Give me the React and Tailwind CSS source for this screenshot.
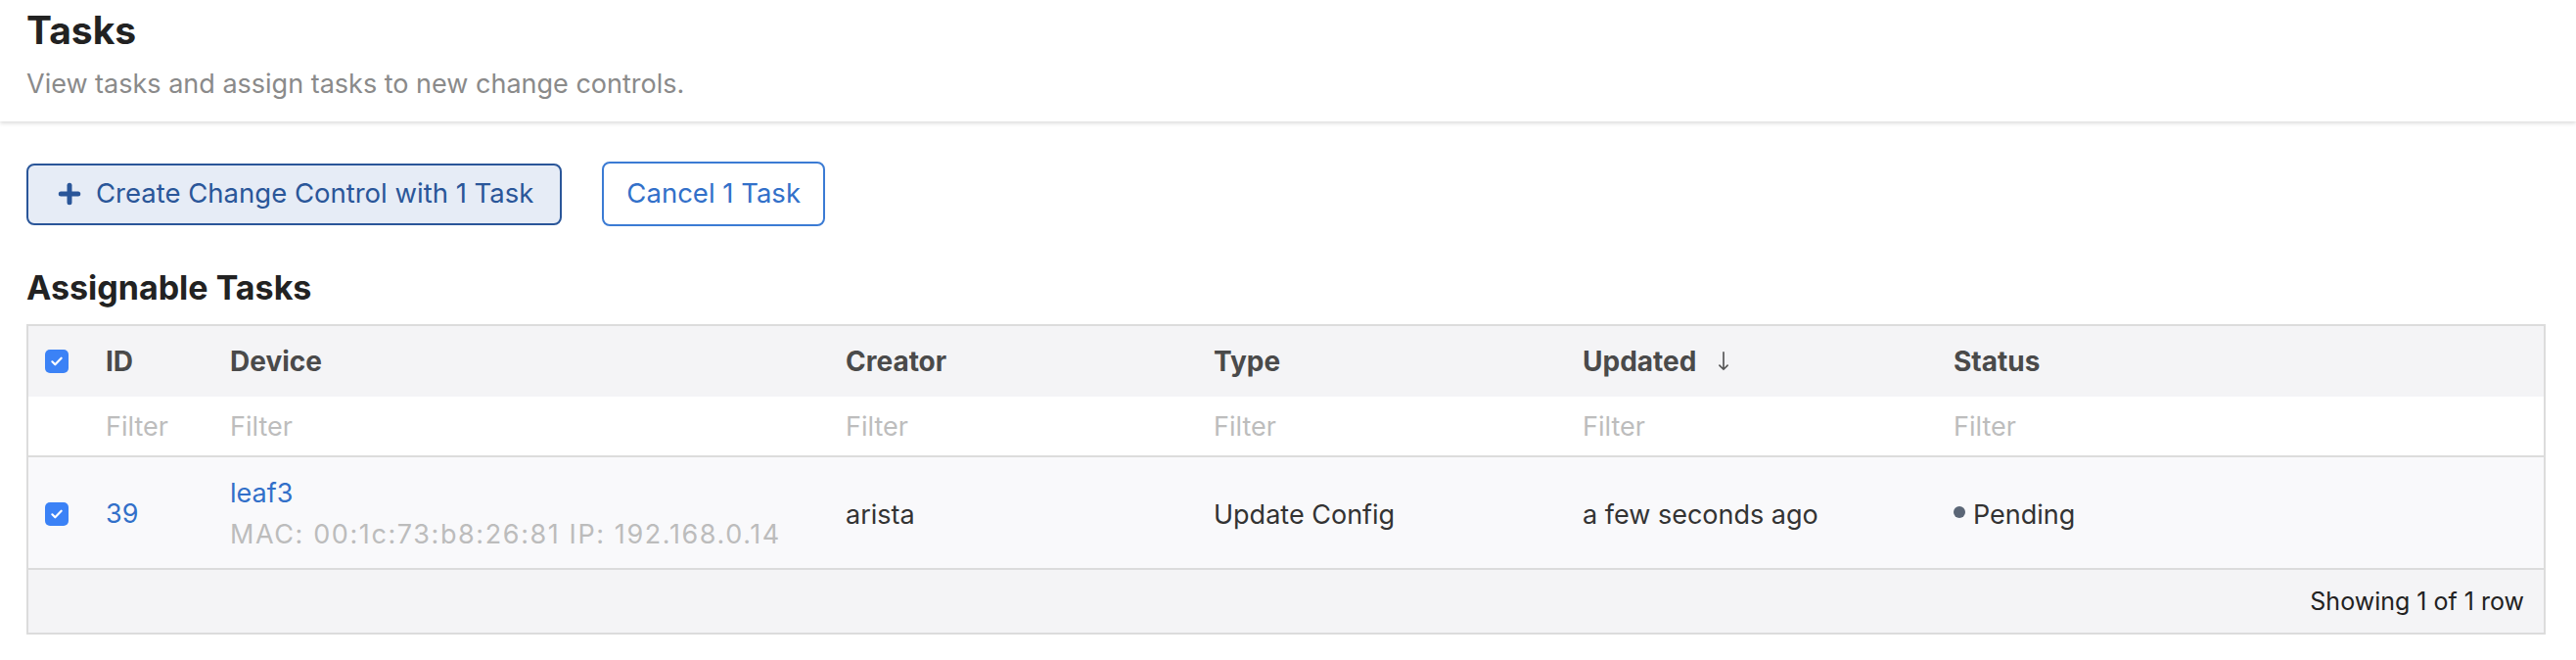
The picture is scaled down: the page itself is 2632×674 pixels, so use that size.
import { Plus } from 'lucide-react';

const COLS = 'grid grid-cols-[61px_127px_629px_376px_377px_379px_1fr]';

function Checkbox() {
  return (
    <span className="flex h-[24px] w-[24px] items-center justify-center rounded-[5px] bg-[#3b82f6]">
      <svg viewBox="0 0 24 24" className="h-[16px] w-[16px]" fill="none" stroke="white" strokeWidth={3.2} strokeLinecap="round" strokeLinejoin="round">
        <path d="M5 12.5l4.5 4.5L19 7" />
      </svg>
    </span>
  );
}

function SortArrow() {
  return (
    <svg viewBox="0 0 12 24" className="ml-[22px] h-[22px] w-[12px]" fill="none" stroke="#555" strokeWidth={1.8} strokeLinecap="round" strokeLinejoin="round">
      <path d="M6 2v19M1.5 16.5L6 21l4.5-4.5" />
    </svg>
  );
}

export default function App() {
  const headers = ['ID', 'Device', 'Creator', 'Type', 'Updated', 'Status'];

  return (
    <div className="min-h-screen bg-white font-['Inter','Noto_Sans',sans-serif] text-[#222]">
      {/* Page header */}
      <header className="relative z-10 h-[124px] bg-white px-[27px] pt-[6px] shadow-[0_2px_4px_rgba(0,0,0,0.14)]">
        <h1 className="text-[39px] font-bold leading-[50px] text-[#222]">Tasks</h1>
        <p className="mt-[12px] text-[27px] leading-[36px] text-[#8a8a8a]">
          View tasks and assign tasks to new change controls.
        </p>
      </header>

      <main className="px-[27px]">
        {/* Actions */}
        <div className="mt-[41px] flex h-[66px] items-center gap-[41px]">
          <button className="flex h-[63px] items-center gap-[12px] rounded-[8px] border-2 border-[#2a5699] bg-[#e6ecf6] pl-[27px] pr-[27px] text-[27.5px] text-[#2a5699]">
            <Plus className="h-[30px] w-[30px]" strokeWidth={4} />
            Create Change Control with 1 Task
          </button>
          <button className="flex h-[66px] items-center rounded-[8px] border-2 border-[#3b7bd4] bg-white px-[23px] text-[27.5px] text-[#3270c9]">
            Cancel 1 Task
          </button>
        </div>

        <h2 className="mt-[43px] text-[34px] font-bold leading-[40px] text-[#222]">Assignable Tasks</h2>

        {/* Table */}
        <div className="mt-[17px] w-[2574px] border-2 border-[#dcdcdc] text-[27px]">
          <div className={`${COLS} h-[72px] items-center bg-[#f4f4f6] text-[28px] font-bold text-[#4a4a4a]`}>
            <div className="pl-[17px]">
              <Checkbox />
            </div>
            {headers.map((h) => (
              <div key={h} className="flex items-center pl-[18px]">
                {h}
                {h === 'Updated' && <SortArrow />}
              </div>
            ))}
          </div>

          <div className={`${COLS} h-[62px] items-center border-b-2 border-[#dcdcdc] bg-white text-[#bdbdbd]`}>
            <div />
            {headers.map((h) => (
              <div key={h} className="pl-[18px] pt-[2px]">Filter</div>
            ))}
          </div>

          <div className={`${COLS} h-[115px] items-center border-b-2 border-[#dcdcdc] bg-[#f9f9fb] text-[#333]`}>
            <div className="pl-[17px] pt-[2px]">
              <Checkbox />
            </div>
            <div className="pl-[18px] pt-[4px] text-[#3270c9]">39</div>
            <div className="pl-[18px] pt-[2px] leading-[42px]">
              <div className="text-[#3270c9]">leaf3</div>
              <div className="whitespace-nowrap tracking-[1.6px] text-[#bcbcbc]">MAC: 00:1c:73:b8:26:81 IP: 192.168.0.14</div>
            </div>
            <div className="pl-[18px] pt-[5px]">arista</div>
            <div className="pl-[18px] pt-[5px]">Update Config</div>
            <div className="pl-[18px] pt-[5px]">a few seconds ago</div>
            <div className="flex items-center gap-[8px] pl-[18px] pt-[5px]">
              <span className="mb-[6px] h-[12px] w-[12px] rounded-full bg-[#5b6676]" />
              Pending
            </div>
          </div>

          <div className="flex h-[64px] items-center justify-end bg-[#f4f4f6] pr-[20px] pt-[2px] text-[25px] text-[#222]">
            Showing 1 of 1 row
          </div>
        </div>
      </main>
    </div>
  );
}
